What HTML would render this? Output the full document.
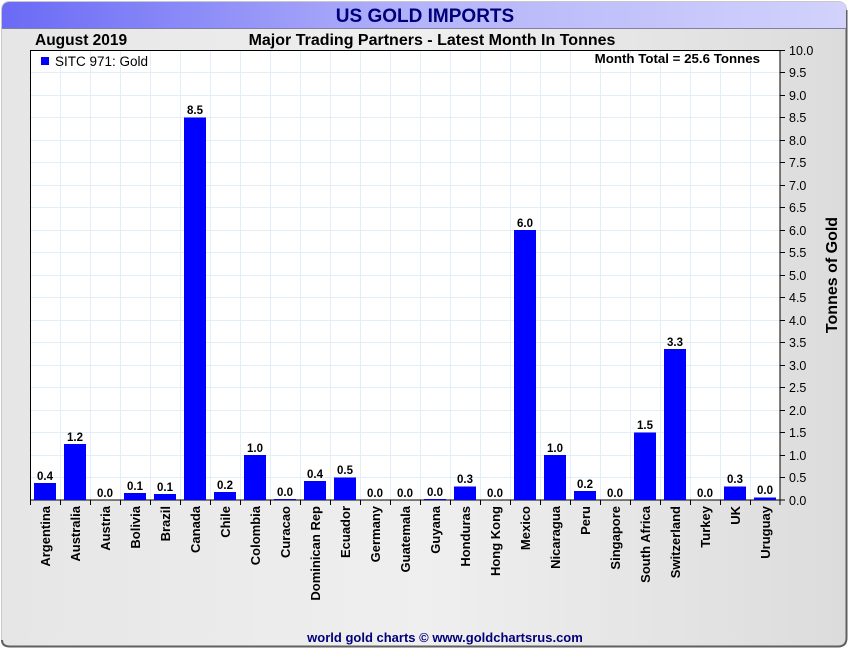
<!DOCTYPE html>
<html><head><meta charset="utf-8"><style>
html,body{margin:0;padding:0;width:850px;height:650px;overflow:hidden;background:#fff}
svg{display:block;font-family:"Liberation Sans",Arial,sans-serif}
</style></head><body>
<svg width="850" height="650" viewBox="0 0 850 650" xmlns="http://www.w3.org/2000/svg">
<defs>
<linearGradient id="bg" x1="0" y1="0" x2="1" y2="0"><stop offset="0" stop-color="#e6e6e6"/><stop offset="0.5" stop-color="#efefef"/><stop offset="1" stop-color="#dcdcdc"/></linearGradient>
<linearGradient id="tb" x1="0" y1="0" x2="1" y2="0"><stop offset="0" stop-color="#6a6af6"/><stop offset="0.5" stop-color="#b4b4fa"/><stop offset="1" stop-color="#d2d2fc"/></linearGradient>
</defs>
<rect x="0" y="0" width="850" height="650" fill="#fff"/>
<rect x="1.5" y="1.5" width="845" height="645" rx="8" fill="url(#bg)" stroke="#c8c8c8" stroke-width="1"/>
<path d="M846.5 10 V638 Q846.5 646.5 838 646.5 H10 Q2 646.5 2 640" fill="none" stroke="#606060" stroke-width="2"/>
<path d="M2 28 V10 Q2 2 10 2 H838 Q846 2 846 10 V28 Z" fill="url(#tb)"/>
<line x1="2" y1="28.5" x2="846" y2="28.5" stroke="#8080a0" stroke-width="1"/>
<text x="425" y="22" text-anchor="middle" font-size="19" font-weight="bold" fill="#00007a">US GOLD IMPORTS</text>
<text x="35" y="45" font-size="15.5" font-weight="bold" fill="#000">August 2019</text>
<text x="432" y="45" text-anchor="middle" font-size="16" font-weight="bold" fill="#000">Major Trading Partners - Latest Month In Tonnes</text>
<rect x="30.5" y="50.5" width="749.5" height="449.5" fill="#fff"/>
<g stroke="#e2eef8" stroke-width="1">
<line x1="60.5" y1="51" x2="60.5" y2="500"/><line x1="90.5" y1="51" x2="90.5" y2="500"/><line x1="120.5" y1="51" x2="120.5" y2="500"/><line x1="150.5" y1="51" x2="150.5" y2="500"/><line x1="180.5" y1="51" x2="180.5" y2="500"/><line x1="210.5" y1="51" x2="210.5" y2="500"/><line x1="240.5" y1="51" x2="240.5" y2="500"/><line x1="270.5" y1="51" x2="270.5" y2="500"/><line x1="300.5" y1="51" x2="300.5" y2="500"/><line x1="330.5" y1="51" x2="330.5" y2="500"/><line x1="360.5" y1="51" x2="360.5" y2="500"/><line x1="390.5" y1="51" x2="390.5" y2="500"/><line x1="420.5" y1="51" x2="420.5" y2="500"/><line x1="450.5" y1="51" x2="450.5" y2="500"/><line x1="480.5" y1="51" x2="480.5" y2="500"/><line x1="510.5" y1="51" x2="510.5" y2="500"/><line x1="540.5" y1="51" x2="540.5" y2="500"/><line x1="570.5" y1="51" x2="570.5" y2="500"/><line x1="600.5" y1="51" x2="600.5" y2="500"/><line x1="630.5" y1="51" x2="630.5" y2="500"/><line x1="660.5" y1="51" x2="660.5" y2="500"/><line x1="690.5" y1="51" x2="690.5" y2="500"/><line x1="720.5" y1="51" x2="720.5" y2="500"/><line x1="750.5" y1="51" x2="750.5" y2="500"/>
<line x1="31" y1="72.5" x2="780" y2="72.5"/><line x1="31" y1="95.5" x2="780" y2="95.5"/><line x1="31" y1="117.5" x2="780" y2="117.5"/><line x1="31" y1="140.5" x2="780" y2="140.5"/><line x1="31" y1="162.5" x2="780" y2="162.5"/><line x1="31" y1="185.5" x2="780" y2="185.5"/><line x1="31" y1="207.5" x2="780" y2="207.5"/><line x1="31" y1="230.5" x2="780" y2="230.5"/><line x1="31" y1="252.5" x2="780" y2="252.5"/><line x1="31" y1="275.5" x2="780" y2="275.5"/><line x1="31" y1="297.5" x2="780" y2="297.5"/><line x1="31" y1="320.5" x2="780" y2="320.5"/><line x1="31" y1="342.5" x2="780" y2="342.5"/><line x1="31" y1="365.5" x2="780" y2="365.5"/><line x1="31" y1="387.5" x2="780" y2="387.5"/><line x1="31" y1="410.5" x2="780" y2="410.5"/><line x1="31" y1="432.5" x2="780" y2="432.5"/><line x1="31" y1="455.5" x2="780" y2="455.5"/><line x1="31" y1="477.5" x2="780" y2="477.5"/>
</g>
<rect x="30.5" y="50.5" width="749.5" height="449.5" fill="none" stroke="#000" stroke-width="1"/>
<rect x="41" y="57" width="8" height="8" fill="#0000ff"/>
<text x="55" y="66" font-size="13.5" fill="#000">SITC 971: Gold</text>
<text x="760" y="63" text-anchor="end" font-size="13.3" font-weight="bold" fill="#000">Month Total = 25.6 Tonnes</text>
<g fill="#0000ff">
<rect x="34" y="483" width="22" height="17"/>
<rect x="64" y="444" width="22" height="56"/>
<rect x="124" y="493" width="22" height="7"/>
<rect x="154" y="494" width="22" height="6"/>
<rect x="184" y="117.5" width="22" height="382.5"/>
<rect x="214" y="492" width="22" height="8"/>
<rect x="244" y="455" width="22" height="45"/>
<rect x="274" y="499" width="22" height="1"/>
<rect x="304" y="481" width="22" height="19"/>
<rect x="334" y="477.5" width="22" height="22.5"/>
<rect x="424" y="499" width="22" height="1"/>
<rect x="454" y="486.5" width="22" height="13.5"/>
<rect x="514" y="230" width="22" height="270"/>
<rect x="544" y="455" width="22" height="45"/>
<rect x="574" y="491" width="22" height="9"/>
<rect x="634" y="432.5" width="22" height="67.5"/>
<rect x="664" y="349" width="22" height="151"/>
<rect x="724" y="486.5" width="22" height="13.5"/>
<rect x="754" y="497.5" width="22" height="2.5"/>
</g>
<g font-size="11.5" font-weight="bold" text-anchor="middle" fill="#000">
<text x="45" y="480">0.4</text><text x="75" y="441">1.2</text><text x="105" y="497">0.0</text><text x="135" y="490">0.1</text><text x="165" y="491">0.1</text><text x="195" y="114">8.5</text><text x="225" y="489">0.2</text><text x="255" y="452">1.0</text><text x="285" y="496">0.0</text><text x="315" y="478">0.4</text><text x="345" y="474">0.5</text><text x="375" y="497">0.0</text><text x="405" y="497">0.0</text><text x="435" y="496">0.0</text><text x="465" y="483">0.3</text><text x="495" y="497">0.0</text><text x="525" y="227">6.0</text><text x="555" y="452">1.0</text><text x="585" y="488">0.2</text><text x="615" y="497">0.0</text><text x="645" y="429">1.5</text><text x="675" y="346">3.3</text><text x="705" y="497">0.0</text><text x="735" y="483">0.3</text><text x="765" y="494">0.0</text>
</g>
<g stroke="#000" stroke-width="1">
<line x1="30.5" y1="500" x2="30.5" y2="505"/><line x1="60.5" y1="500" x2="60.5" y2="505"/><line x1="90.5" y1="500" x2="90.5" y2="505"/><line x1="120.5" y1="500" x2="120.5" y2="505"/><line x1="150.5" y1="500" x2="150.5" y2="505"/><line x1="180.5" y1="500" x2="180.5" y2="505"/><line x1="210.5" y1="500" x2="210.5" y2="505"/><line x1="240.5" y1="500" x2="240.5" y2="505"/><line x1="270.5" y1="500" x2="270.5" y2="505"/><line x1="300.5" y1="500" x2="300.5" y2="505"/><line x1="330.5" y1="500" x2="330.5" y2="505"/><line x1="360.5" y1="500" x2="360.5" y2="505"/><line x1="390.5" y1="500" x2="390.5" y2="505"/><line x1="420.5" y1="500" x2="420.5" y2="505"/><line x1="450.5" y1="500" x2="450.5" y2="505"/><line x1="480.5" y1="500" x2="480.5" y2="505"/><line x1="510.5" y1="500" x2="510.5" y2="505"/><line x1="540.5" y1="500" x2="540.5" y2="505"/><line x1="570.5" y1="500" x2="570.5" y2="505"/><line x1="600.5" y1="500" x2="600.5" y2="505"/><line x1="630.5" y1="500" x2="630.5" y2="505"/><line x1="660.5" y1="500" x2="660.5" y2="505"/><line x1="690.5" y1="500" x2="690.5" y2="505"/><line x1="720.5" y1="500" x2="720.5" y2="505"/><line x1="750.5" y1="500" x2="750.5" y2="505"/><line x1="780" y1="500" x2="780" y2="505"/>
<line x1="780" y1="50.5" x2="785" y2="50.5"/><line x1="780" y1="72.5" x2="785" y2="72.5"/><line x1="780" y1="95.5" x2="785" y2="95.5"/><line x1="780" y1="117.5" x2="785" y2="117.5"/><line x1="780" y1="140.5" x2="785" y2="140.5"/><line x1="780" y1="162.5" x2="785" y2="162.5"/><line x1="780" y1="185.5" x2="785" y2="185.5"/><line x1="780" y1="207.5" x2="785" y2="207.5"/><line x1="780" y1="230.5" x2="785" y2="230.5"/><line x1="780" y1="252.5" x2="785" y2="252.5"/><line x1="780" y1="275.5" x2="785" y2="275.5"/><line x1="780" y1="297.5" x2="785" y2="297.5"/><line x1="780" y1="320.5" x2="785" y2="320.5"/><line x1="780" y1="342.5" x2="785" y2="342.5"/><line x1="780" y1="365.5" x2="785" y2="365.5"/><line x1="780" y1="387.5" x2="785" y2="387.5"/><line x1="780" y1="410.5" x2="785" y2="410.5"/><line x1="780" y1="432.5" x2="785" y2="432.5"/><line x1="780" y1="455.5" x2="785" y2="455.5"/><line x1="780" y1="477.5" x2="785" y2="477.5"/><line x1="780" y1="500" x2="785" y2="500"/>
</g>
<g font-size="12.5" fill="#000">
<text x="789" y="55">10.0</text><text x="789" y="77">9.5</text><text x="789" y="100">9.0</text><text x="789" y="122">8.5</text><text x="789" y="145">8.0</text><text x="789" y="167">7.5</text><text x="789" y="190">7.0</text><text x="789" y="212">6.5</text><text x="789" y="235">6.0</text><text x="789" y="257">5.5</text><text x="789" y="280">5.0</text><text x="789" y="302">4.5</text><text x="789" y="325">4.0</text><text x="789" y="347">3.5</text><text x="789" y="370">3.0</text><text x="789" y="392">2.5</text><text x="789" y="415">2.0</text><text x="789" y="437">1.5</text><text x="789" y="460">1.0</text><text x="789" y="482">0.5</text><text x="789" y="505">0.0</text>
</g>
<text transform="translate(837,275) rotate(-90)" text-anchor="middle" font-size="16" font-weight="bold" fill="#000">Tonnes of Gold</text>
<g font-size="13" font-weight="bold" fill="#000" text-anchor="end">
<text transform="translate(50,506) rotate(-90)">Argentina</text>
<text transform="translate(80,506) rotate(-90)">Australia</text>
<text transform="translate(110,506) rotate(-90)">Austria</text>
<text transform="translate(140,506) rotate(-90)">Bolivia</text>
<text transform="translate(170,506) rotate(-90)">Brazil</text>
<text transform="translate(200,506) rotate(-90)">Canada</text>
<text transform="translate(230,506) rotate(-90)">Chile</text>
<text transform="translate(260,506) rotate(-90)">Colombia</text>
<text transform="translate(290,506) rotate(-90)">Curacao</text>
<text transform="translate(320,506) rotate(-90)">Dominican Rep</text>
<text transform="translate(350,506) rotate(-90)">Ecuador</text>
<text transform="translate(380,506) rotate(-90)">Germany</text>
<text transform="translate(410,506) rotate(-90)">Guatemala</text>
<text transform="translate(440,506) rotate(-90)">Guyana</text>
<text transform="translate(470,506) rotate(-90)">Honduras</text>
<text transform="translate(500,506) rotate(-90)">Hong Kong</text>
<text transform="translate(530,506) rotate(-90)">Mexico</text>
<text transform="translate(560,506) rotate(-90)">Nicaragua</text>
<text transform="translate(590,506) rotate(-90)">Peru</text>
<text transform="translate(620,506) rotate(-90)">Singapore</text>
<text transform="translate(650,506) rotate(-90)">South Africa</text>
<text transform="translate(680,506) rotate(-90)">Switzerland</text>
<text transform="translate(710,506) rotate(-90)">Turkey</text>
<text transform="translate(740,506) rotate(-90)">UK</text>
<text transform="translate(770,506) rotate(-90)">Uruguay</text>
</g>
<text x="445" y="642" text-anchor="middle" font-size="13" font-weight="bold" fill="#00007a">world gold charts © www.goldchartsrus.com</text>
</svg>
</body></html>
